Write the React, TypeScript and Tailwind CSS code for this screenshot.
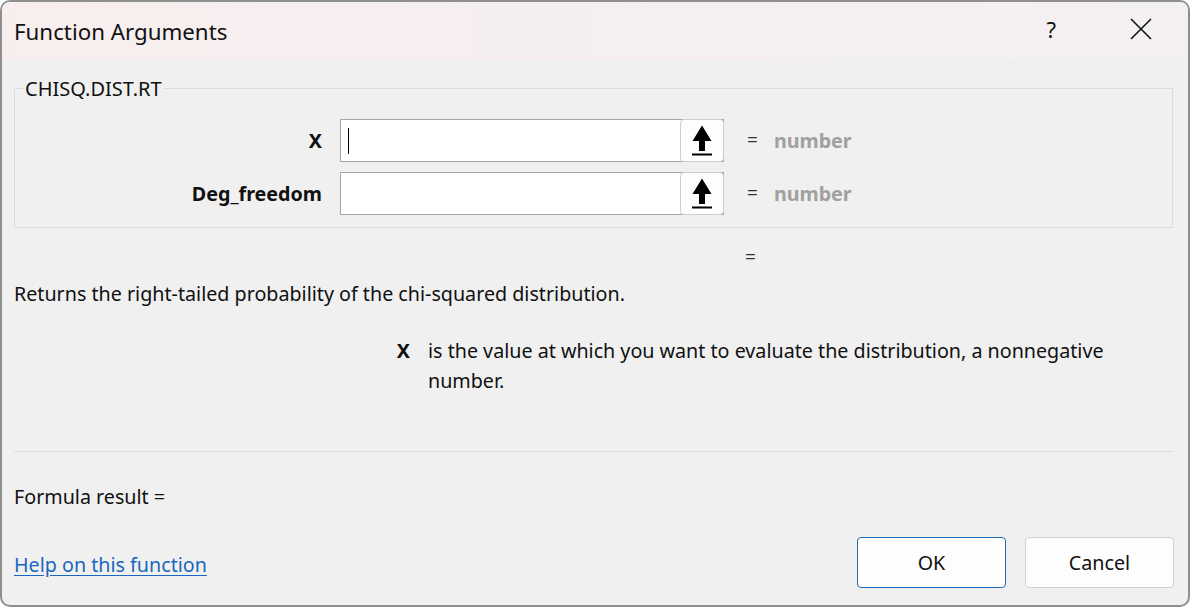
function PickButton() {
    return (
        <div className="-my-px -mr-px w-[44px] flex justify-center pt-[5px] bg-[#fdfdfd] border border-[#cdcdcd] rounded-[4px]">
            <svg width="22" height="31" viewBox="0 0 22 31">
                <path d="M11 0.5 L20.5 16 L14 16 L14 26 L8 26 L8 16 L1.5 16 Z" fill="#000" />
                <rect x="1" y="28.5" width="20" height="2" fill="#000" />
            </svg>
        </div>
    )
}

function ArgRow({ label, caret }: { label: string, caret?: boolean }) {
    return (
        <div className="flex items-center h-[43px]">
            <span className="w-[315px] text-right font-bold text-[19.7px] pr-[18px]">{label}</span>
            <div className="flex items-stretch w-[384px] h-full bg-white border border-[#a6a6a6]">
                <div className="flex-1 flex items-center pl-[7px]">
                    {caret && <div className="w-px h-[26px] bg-black" />}
                </div>
                <PickButton />
            </div>
            <span className="ml-[23px] text-[19px] text-[#333]">=</span>
            <span className="ml-[16px] text-[19.7px] font-bold text-[#a0a0a0]">number</span>
        </div>
    )
}

export default function App() {
    return (
        <div className="w-[1190px] h-[607px] bg-[#f0f0f0] border-[2px] border-[#8f8f8f] rounded-[10px] overflow-hidden flex flex-col text-[#111] font-['Segoe_UI','Noto_Sans','Open_Sans',sans-serif]">
            <div className="h-[58px] shrink-0 flex items-center bg-gradient-to-r from-[#f8eeee] to-[#f3f0f4] pl-[12px]">
                <span className="text-[22.3px] flex-1 pt-[1px]">Function Arguments</span>
                <span className="text-[22px] mr-[74px] -mt-[3px]">?</span>
                <svg className="mr-[36px] -mt-[4px]" width="22" height="22" viewBox="0 0 22 22">
                    <path d="M1 1 L21 21 M21 1 L1 21" stroke="#111" strokeWidth="1.6" fill="none" />
                </svg>
            </div>

            <div className="pl-[12px] pr-[12px] flex flex-col">
                <fieldset className="mt-[15px] mr-[3px] border border-[#dcdcdc] h-[153px] px-[10px]">
                    <legend className="text-[20px] px-[1px] -ml-[1px] leading-[27px]">CHISQ.DIST.RT</legend>
                    <div className="flex flex-col gap-[10px] mt-[17px]">
                        <ArgRow label="X" caret />
                        <ArgRow label="Deg_freedom" />
                    </div>
                </fieldset>

                <div className="h-[54px] pl-[731px] pt-[17px] leading-[24px] text-[19px] text-[#333]">=</div>

                <div className="text-[19.7px] leading-[24px]">Returns the right-tailed probability of the chi-squared distribution.</div>

                <div className="flex mt-[30px] text-[19.7px] leading-[30px]">
                    <span className="w-[414px] text-right font-bold pr-[18px]">X</span>
                    <span className="w-[700px]">is the value at which you want to evaluate the distribution, a nonnegative number.</span>
                </div>

                <div className="mt-[55px] mr-[3px] border-t border-[#dcdcdc]" />

                <div className="mt-[33px] text-[19.7px] leading-[24px]">Formula result =</div>

                <div className="flex items-center justify-between mt-[28px]">
                    <a className="text-[19.7px] leading-[24px] pt-[5px] text-[#1a67c0] underline underline-offset-[3px]">Help on this function</a>
                    <div className="flex gap-[19px] mr-[2px]">
                        <button className="w-[149px] h-[51px] bg-[#fdfdfd] border border-[#1e6ab5] rounded-[4px] text-[19.7px]">OK</button>
                        <button className="w-[149px] h-[51px] bg-[#fdfdfd] border border-[#d0d0d0] rounded-[4px] text-[19.7px]">Cancel</button>
                    </div>
                </div>
            </div>
        </div>
    )
}
